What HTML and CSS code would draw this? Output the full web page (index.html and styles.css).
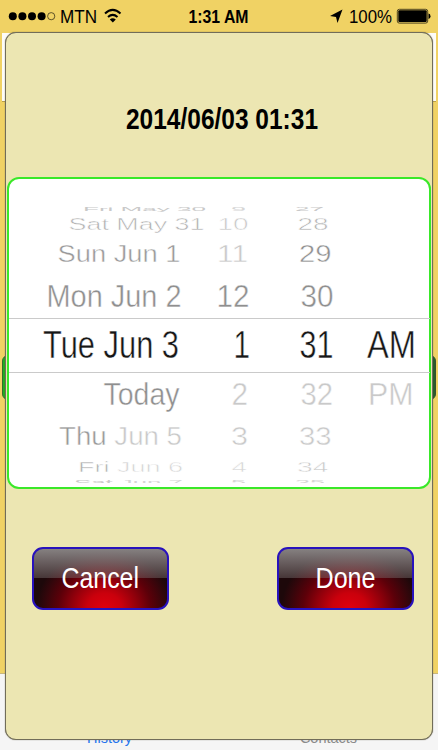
FILE: index.html
```html
<!DOCTYPE html>
<html lang="en">
<head>
<meta charset="utf-8">
<title>Date picker</title>
<link rel="stylesheet" href="styles.css">
</head>
<body>
<div class="screen">
  <header class="status">
    <svg width="438" height="32" viewBox="0 0 438 32">
      <circle cx="12.8" cy="16.2" r="4"/><circle cx="22.4" cy="16.2" r="4"/><circle cx="32" cy="16.2" r="4"/><circle cx="41.6" cy="16.2" r="4"/>
      <circle class="ring" cx="51.2" cy="16.2" r="3.6"/>
      <text x="60" y="23" font-size="19" textLength="37" lengthAdjust="spacingAndGlyphs">MTN</text>
      <g class="wifi"><path d="M105 13.500Q112.700 6.300 120.500 13.500"/><path d="M108 17Q112.700 12.700 117.500 17"/></g>
      <path d="M109.800 19.400Q112.700 17 115.800 19.400L112.800 22.500Z"/>
      <text class="clock" x="188.500" y="23" font-size="19" textLength="60" lengthAdjust="spacingAndGlyphs">1:31 AM</text>
      <path d="M342.500 9.500L337.500 23L336 17L330 16Z"/>
      <text x="349" y="23" font-size="19" textLength="43" lengthAdjust="spacingAndGlyphs">100%</text>
      <rect class="battery" x="397.300" y="9.300" width="30.400" height="13.800" rx="2"/>
      <rect x="398.300" y="10.300" width="28.400" height="11.800" rx="1"/>
      <path d="M428.500 13.500q2 0 2 2.700t-2 2.700z"/>
    </svg>
  </header>
  <div class="navbar"></div>
  <main class="content"><i class="nub"></i><i class="nub"></i></main>
  <footer class="tabs"><span class="tab active">History</span><span class="tab">Contacts</span></footer>

  <section class="dialog">
    <svg class="title" width="426" height="40" viewBox="6 100 426 40">
      <text x="126" y="129" font-size="29.500" textLength="192" lengthAdjust="spacingAndGlyphs">2014/06/03 01:31</text>
    </svg>
    <div class="picker">
      <svg class="row" height="9" viewBox="9 204 421 9">
        <g class="faint" font-size="6">
        <text class="c4" x="83" y="211" textLength="123" lengthAdjust="spacingAndGlyphs">Fri May 30</text>
        <text class="c5" x="231" y="211" textLength="15" lengthAdjust="spacingAndGlyphs">9</text>
        <text class="c4" x="295" y="211" textLength="29" lengthAdjust="spacingAndGlyphs">27</text></g>
      </svg>
      <svg class="row" height="23" viewBox="9 213 421 23">
        <g font-size="16">
        <text class="c3" x="68.500" y="229.500" textLength="136" lengthAdjust="spacingAndGlyphs">Sat May 31</text>
        <text class="c4" x="217.500" y="229.500" textLength="31" lengthAdjust="spacingAndGlyphs">10</text>
        <text class="c3" x="297.500" y="229.500" textLength="31" lengthAdjust="spacingAndGlyphs">28</text></g>
      </svg>
      <svg class="row" height="37" viewBox="9 236 421 37">
        <g font-size="24.500">
        <text class="c2" x="57.500" y="262.300" textLength="123" lengthAdjust="spacingAndGlyphs">Sun Jun 1</text>
        <text class="c4" x="217" y="262.300" textLength="31" lengthAdjust="spacingAndGlyphs">11</text>
        <text class="c1" x="299" y="262.300" textLength="32.500" lengthAdjust="spacingAndGlyphs">29</text></g>
      </svg>
      <svg class="row" height="45" viewBox="9 273 421 45">
        <g font-size="31.500">
        <text class="c1" x="46.500" y="307" textLength="135" lengthAdjust="spacingAndGlyphs">Mon Jun 2</text>
        <text class="c1" x="216.500" y="307" textLength="33" lengthAdjust="spacingAndGlyphs">12</text>
        <text class="c1" x="300.500" y="307" textLength="33" lengthAdjust="spacingAndGlyphs">30</text></g>
      </svg>
      <svg class="row selected" height="55" viewBox="9 318 421 55">
        <path d="M9 318.500H430M9 372.500H430"/>
        <g font-size="38">
        <text x="43" y="358" textLength="136" lengthAdjust="spacingAndGlyphs">Tue Jun 3</text>
        <text x="233.500" y="358" textLength="16.500" lengthAdjust="spacingAndGlyphs">1</text>
        <text x="299.500" y="358" textLength="34" lengthAdjust="spacingAndGlyphs">31</text>
        <text x="367" y="358" textLength="49" lengthAdjust="spacingAndGlyphs">AM</text></g>
      </svg>
      <svg class="row" height="44" viewBox="9 373 421 44">
        <g font-size="31.500">
        <text class="c1" x="103.500" y="405" textLength="76" lengthAdjust="spacingAndGlyphs">Today</text>
        <text class="c4" x="231.500" y="405" textLength="16.500" lengthAdjust="spacingAndGlyphs">2</text>
        <text class="c4" x="300.500" y="405" textLength="32.500" lengthAdjust="spacingAndGlyphs">32</text>
        <text class="c4" x="368" y="405" textLength="45.500" lengthAdjust="spacingAndGlyphs">PM</text></g>
      </svg>
      <svg class="row" height="37" viewBox="9 417 421 37">
        <g font-size="25">
        <text class="c4" x="59" y="445" textLength="123" lengthAdjust="spacingAndGlyphs"><tspan class="c2">Thu</tspan> Jun 5</text>
        <text class="c4" x="231" y="445" textLength="17" lengthAdjust="spacingAndGlyphs">3</text>
        <text class="c4" x="299" y="445" textLength="32.500" lengthAdjust="spacingAndGlyphs">33</text></g>
      </svg>
      <svg class="row" height="23" viewBox="9 454 421 23">
        <g font-size="15.500">
        <text class="c5" x="78" y="471.500" textLength="105" lengthAdjust="spacingAndGlyphs"><tspan class="c3">Fri</tspan> Jun 6</text>
        <text class="c5" x="231.500" y="471.500" textLength="15.500" lengthAdjust="spacingAndGlyphs">4</text>
        <text class="c4" x="297" y="471.500" textLength="31.500" lengthAdjust="spacingAndGlyphs">34</text></g>
      </svg>
      <svg class="row" height="6" viewBox="9 477 421 6">
        <g class="faint" font-size="8">
        <text class="c5" x="74" y="484.800" textLength="109" lengthAdjust="spacingAndGlyphs"><tspan class="c4">Sat</tspan> Jun 7</text>
        <text class="c5" x="231" y="484.800" textLength="15" lengthAdjust="spacingAndGlyphs">5</text>
        <text class="c5" x="295" y="484.800" textLength="30" lengthAdjust="spacingAndGlyphs">35</text></g>
      </svg>
    </div>
    <div class="actions">
      <button class="btn"><svg width="133" height="59" viewBox="34 549.500 133 59"><text x="61.500" y="588.500" font-size="29" textLength="77.500" lengthAdjust="spacingAndGlyphs">Cancel</text></svg></button>
      <button class="btn"><svg width="133" height="59" viewBox="279 549.500 133 59"><text x="315.500" y="588.500" font-size="29" textLength="60" lengthAdjust="spacingAndGlyphs">Done</text></svg></button>
    </div>
  </section>
</div>
</body>
</html>
```
FILE: styles.css
```css
* { box-sizing: border-box; }
body { margin: 0; font-family: "Liberation Sans", Arial, sans-serif; }
svg { display: block; }
.screen {
  position: relative;
  width: 438px;
  height: 750px;
  overflow: hidden;
  display: flex;
  flex-direction: column;
  background: #f0d264;
}
.status { height: 33px; }
.clock { font-weight: bold; }
.ring { fill: none; stroke: #3b3418; stroke-width: .8; }
.wifi { fill: none; stroke: #000; stroke-width: 2; }
.battery { fill: none; stroke: #4d431f; stroke-width: 1; }
.navbar {
  height: 69px;
  margin: 0 2px;
  background: #fdfcf8;
  border-bottom: 1px solid #b9a04a;
}
.content {
  flex: 1;
  display: flex;
  justify-content: space-between;
  padding: 253px 2px 0;
}
.nub {
  width: 12px;
  height: 45px;
  border: 1px solid #33702b;
  border-radius: 8px;
  background: #22ae1e;
}
.nub:last-child { background: #275c2b; border-color: #33502b; }
.tabs {
  height: 77px;
  border-top: 1px solid #c8b67c;
  background: #f5f5f5;
  display: flex;
  align-items: flex-end;
  padding-bottom: 4px;
  font-size: 14.5px;
  line-height: 16px;
}
.tab { width: 50%; color: #8b8b8b; text-align: center; }
.tab.active { color: #2675ee; }
.dialog {
  position: absolute;
  left: 5px;
  top: 32px;
  width: 428px;
  height: 708px;
  border: 1px solid #716d59;
  box-shadow: 0 0 1px #58543e;
  border-radius: 11px;
  background: #ece6b2;
  padding-top: 67px;
}
.title { font-weight: bold; }
.picker {
  width: 424px;
  height: 312px;
  margin: 37px 0 0 1px;
  padding-top: 25px;
  border: 2px solid #3ae829;
  border-radius: 12px;
  background: #fff;
}
.row { width: 421px; overflow: hidden; }
.row text { stroke: #fff; stroke-width: .45; }
.row .faint text { stroke: none; }
.selected { fill: #161616; }
.selected path { stroke: #cacaca; }
.c1 { fill: #8f8f8f; }
.c2 { fill: #999; }
.c3 { fill: #b2b2b2; }
.c4 { fill: #c9c9c9; }
.c5 { fill: #d6d6d6; }
.actions {
  display: flex;
  justify-content: space-between;
  padding: 58px 18px 0 26px;
}
.btn {
  width: 137px;
  height: 63px;
  padding: 0;
  border: 2px solid #2812bd;
  border-radius: 11px;
  background:
    linear-gradient(#858080 0, rgba(125, 115, 115, .42) 50%, transparent 50%),
    radial-gradient(ellipse 68px 60px at 53% 100%, #e0000e 0, #ca000c 25%, #8c000b 50%, #5c0009 68%, #33060b 88%, #1d080a 100%);
  fill: #fff;
  font-family: inherit;
}
```
